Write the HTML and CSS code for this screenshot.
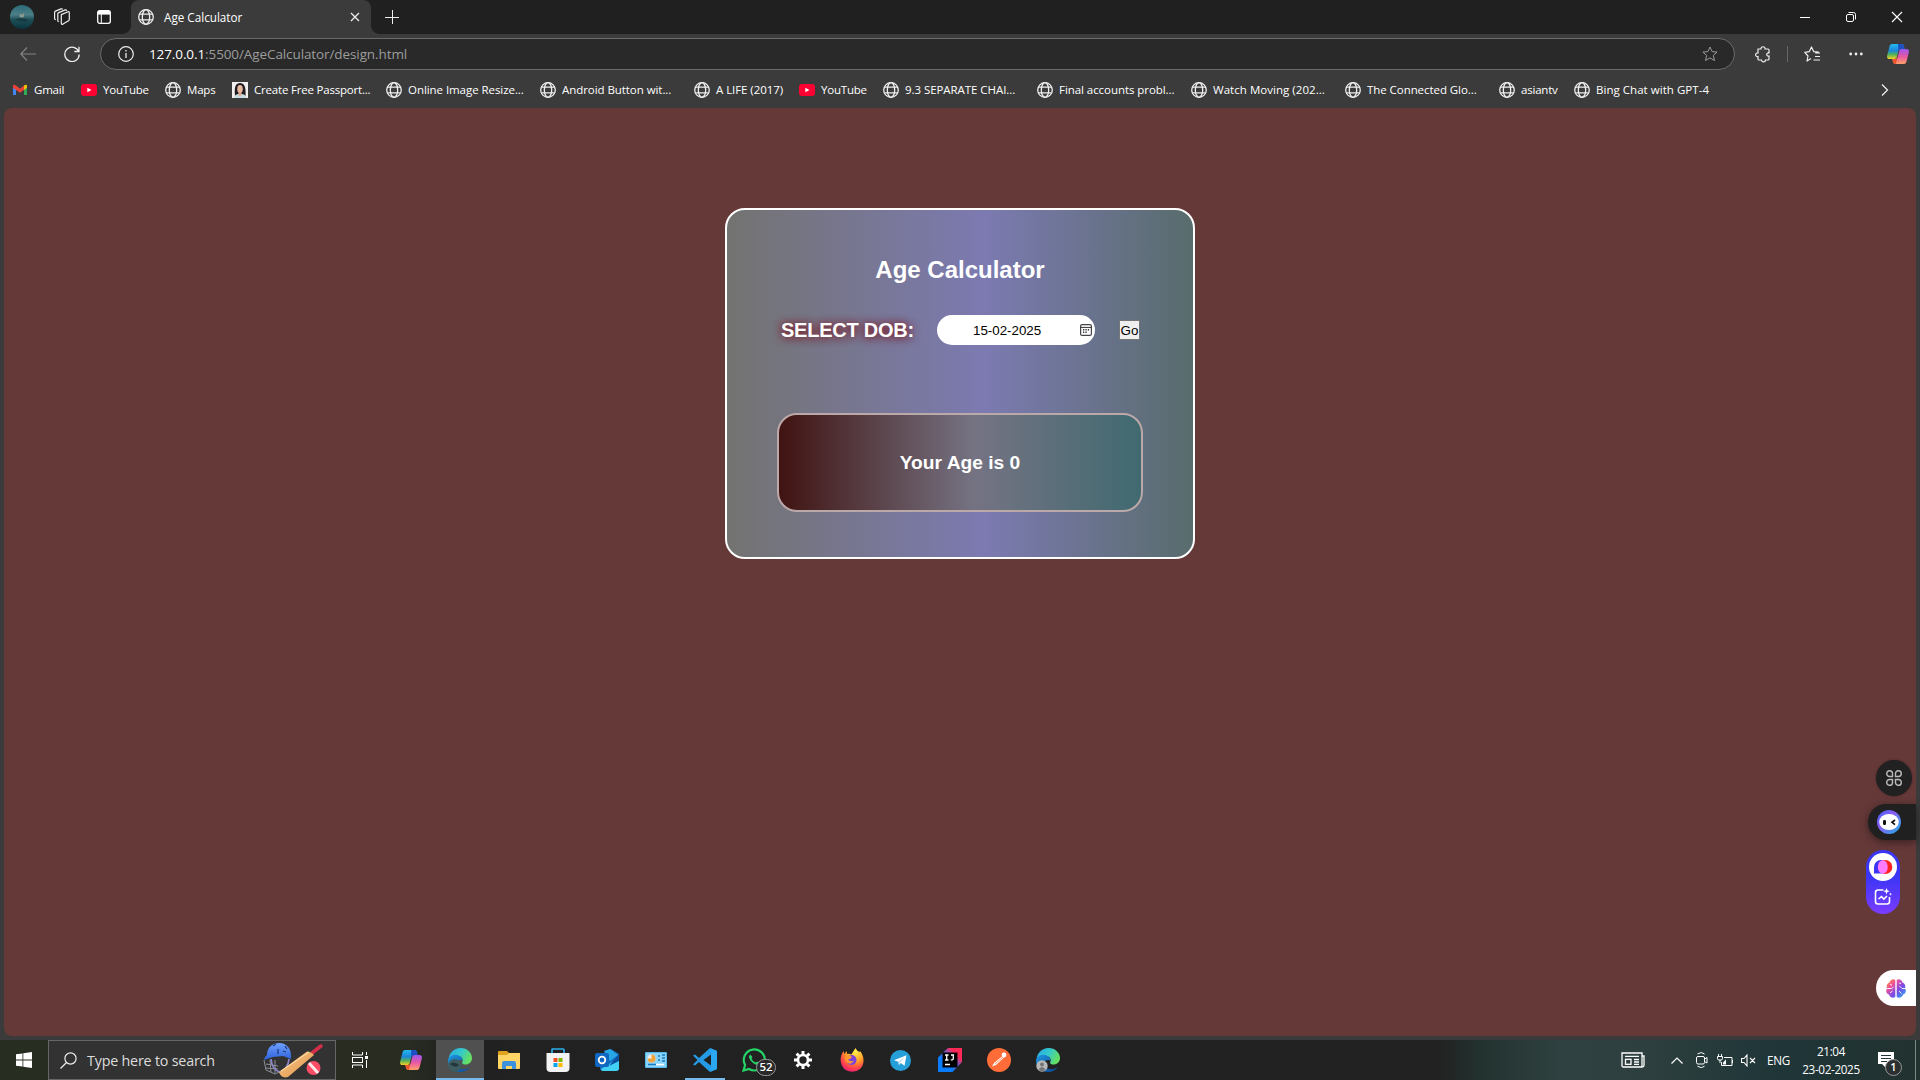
FILE: index.html
```html
<!DOCTYPE html>
<html lang="en">
<head>
<meta charset="utf-8">
<title>Age Calculator</title>
<link rel="stylesheet" href="styles.css">
</head>
<body>
<svg class="defs" width="0" height="0" aria-hidden="true">
  <defs>
    <linearGradient id="cpA" x1="0" y1="0" x2="0" y2="1"><stop offset="0" stop-color="#23b8f0"/><stop offset=".45" stop-color="#1c86d8"/><stop offset=".7" stop-color="#52b25c"/><stop offset="1" stop-color="#f6cf22"/></linearGradient>
    <linearGradient id="cpB" x1="0" y1="0" x2="0" y2="1"><stop offset="0" stop-color="#9a58ee"/><stop offset=".5" stop-color="#e857a6"/><stop offset="1" stop-color="#ffa067"/></linearGradient>
    <linearGradient id="edA" x1="0" y1="0" x2="1" y2=".4"><stop offset="0" stop-color="#2aa7e6"/><stop offset=".55" stop-color="#34c9cd"/><stop offset="1" stop-color="#63df63"/></linearGradient>
    <linearGradient id="edB" x1="0" y1="0" x2="1" y2="1"><stop offset="0" stop-color="#1e96e0"/><stop offset="1" stop-color="#0d4897"/></linearGradient>
    <radialGradient id="ffA" cx=".65" cy=".15" r=".95"><stop offset="0" stop-color="#fff14a"/><stop offset=".45" stop-color="#ff9a26"/><stop offset=".75" stop-color="#ff3f4e"/><stop offset="1" stop-color="#e31587"/></radialGradient>
    <linearGradient id="ij" x1="0" y1="1" x2="1" y2="0"><stop offset=".35" stop-color="#087cfa"/><stop offset=".6" stop-color="#8b55b8"/><stop offset=".75" stop-color="#fe2857"/></linearGradient>
    <linearGradient id="helm" x1="0" y1="0" x2="0" y2="1"><stop offset="0" stop-color="#6fa0ff"/><stop offset="1" stop-color="#2d60d8"/></linearGradient>
    <linearGradient id="bat" x1="0" y1="0" x2="1" y2="1"><stop offset="0" stop-color="#ffd08a"/><stop offset="1" stop-color="#d98c48"/></linearGradient>
    <linearGradient id="brain" x1="0" y1="0" x2="1" y2="1"><stop offset="0" stop-color="#ffa21e"/><stop offset=".3" stop-color="#f0509a"/><stop offset=".6" stop-color="#7a4be8"/><stop offset="1" stop-color="#1fb6f2"/></linearGradient>
    <linearGradient id="ring" x1="0" y1="0" x2="1" y2="1"><stop offset="0" stop-color="#3b62f5"/><stop offset=".4" stop-color="#8b5cf6"/><stop offset="1" stop-color="#1bb5ea"/></linearGradient>
    <linearGradient id="sea" x1="0" y1="0" x2="0" y2="1"><stop offset="0" stop-color="#2c6a78"/><stop offset=".4" stop-color="#4c7f87"/><stop offset=".6" stop-color="#1d5058"/><stop offset="1" stop-color="#0b333d"/></linearGradient>
  </defs>
  <symbol id="globe" viewBox="0 0 16 16"><g fill="none" stroke="#eee" stroke-width="1.3"><circle cx="8" cy="8" r="7.3"/><ellipse cx="8" cy="8" rx="3.7" ry="7.3"/><path d="M1.4 5.2h13.2M1.4 10.8h13.2"/></g></symbol>
  <symbol id="copilot" viewBox="0 0 22 20"><path d="M5 0h9c2 0 2.6 1 3 2.600L17.500 5H14c-1.500 0-2.300.8-2.700 2.300L9.800 13c-.5 1.600-1.300 2-3 2H2.500C.3 15-.3 13.500.2 11.400L2.500 2.500C2.900.9 3.500 0 5 0z" fill="url(#cpA)"/><path d="M11 0h3c2 0 2.600 1 3 2.600L17.500 5H14c-1.300 0-2.100.6-2.600 1.700z" fill="#1d4fc4"/><path d="M17 20H9c-2 0-2.700-1-3.100-2.600L5.300 15H8c1.500 0 2.300-.8 2.700-2.300L12.200 7c.5-1.600 1.300-2 3-2h4.300c2.200 0 2.800 1.500 2.300 3.600L19.500 17.500c-.4 1.600-1 2.500-2.500 2.500z" fill="url(#cpB)"/><path d="M5.300 15H8c1.200 0 2-.5 2.500-1.600L8.900 20C7.100 19.900 6.300 19 5.900 17.400z" fill="#f0562b"/></symbol>
  <symbol id="edge" viewBox="0 0 24 24"><path d="M1 15C-1 7 5 0 12.500 0 19.500 0 24 5 24 10c0 4-3 6.500-6.500 6.500-2.500 0-4-1-3.200-2.600.9-1.600.7-5.900-5.300-5.900C4 8 1.200 11.500 1 15z" fill="url(#edA)"/><path d="M.1 11.500C1.500 8 5.500 6.300 9 7c3.500.6 6 3.200 5.300 5.800-1.500-1.600-6.800-.8-5.800 4 .9 4.200 5.700 5.600 10.500 3.700l2.600-1.500c-2 3.300-5.500 5-9.600 5C5 24-.6 18.500.1 11.500z" fill="url(#edB)"/></symbol>
  <symbol id="youtube" viewBox="0 0 16 12"><rect width="16" height="12" rx="3" fill="#ff0033"/><path d="M6.300 3.700v4.600l4.200-2.300z" fill="#fff"/></symbol>
</svg>

<header class="titlebar">
  <div class="tb-left">
    <svg class="avatar" width="24" height="24" viewBox="0 0 24 24"><circle cx="12" cy="12" r="12" fill="url(#sea)"/><path d="M5 14.500q7-3 14 1-7 3-14-1z" fill="#173b42"/><path d="M9.500 12l.5-3 3 .5.500-1.500.8 1.500-.8 3z" fill="#8f9a90"/></svg>
    <svg class="workspaces" width="18" height="18" viewBox="0 0 18 18"><g fill="none" stroke="#eee" stroke-width="1.200" stroke-linejoin="round"><path d="M8.300 6.600L15 3.800q1.300-.4 1.300.9v6.800q0 .8-.8 1.300L10 16.100q-1.700.7-1.700-1z"/><path d="M5.800 13.600q-1 .1-1-1.100V5.800q0-.8.900-1.200l6.500-2.700q1.200-.3 1.600.9"/><path d="M2.800 11.700Q1.600 11.500 1.600 10.500V4.300q0-.8.900-1.200L8 .9q1.200-.4 1.700.5"/></g></svg>
    <svg class="tab-actions" width="14" height="14" viewBox="0 0 14 14"><rect x=".7" y=".7" width="12.600" height="12.600" rx="2" fill="none" stroke="#fff" stroke-width="1.300"/><path d="M1 1h12v3.600H1z" fill="#fff"/><path d="M4.300 4v9" stroke="#fff"/></svg>
  </div>
  <div class="tab">
    <svg width="16" height="16"><use href="#globe"/></svg>
    <span class="tab-title">Age Calculator</span>
    <svg class="tab-close" width="10" height="10" viewBox="0 0 10 10"><path d="M1 1l8 8M9 1L1 9" stroke="#eee" stroke-width="1.300"/></svg>
  </div>
  <svg class="new-tab" width="14" height="14" viewBox="0 0 14 14"><path d="M7.500 0v14M0 7.500h14" stroke="#eee"/></svg>
  <div class="window-buttons">
    <svg width="46" height="34" viewBox="0 0 46 34"><path d="M18 17.500h10" stroke="#fff"/></svg>
    <svg width="46" height="34" viewBox="0 0 46 34"><g fill="none" stroke="#fff"><rect x="18.500" y="14.500" width="7" height="7" rx="1.500"/><path d="M20.500 12.500h5q2 0 2 2v5"/></g></svg>
    <svg width="46" height="34" viewBox="0 0 46 34"><path d="M18 12l10 10M28 12L18 22" stroke="#fff" stroke-width="1.100"/></svg>
  </div>
</header>

<section class="toolbar">
  <svg class="back" width="16" height="14" viewBox="0 0 16 14"><path d="M7 .5L.8 7 7 13.500M1 7h15" fill="none" stroke="#858585" stroke-width="1.100"/></svg>
  <svg class="reload" width="16" height="16" viewBox="0 0 16 16"><path d="M14.800 6A7.200 7.200 0 1 0 15.200 8.500M15 .8V5.500H10.300" fill="none" stroke="#eee" stroke-width="1.300"/></svg>
  <div class="address">
    <svg width="16" height="16" viewBox="0 0 16 16"><circle cx="8" cy="8" r="7.300" fill="none" stroke="#eee" stroke-width="1.200"/><path d="M8 7v5M8 4v1.500" stroke="#ddd" stroke-width="1.400"/></svg>
    <span class="url"><b>127.0.0.1</b>:5500/AgeCalculator/design.html</span>
    <svg class="star" width="16" height="16" viewBox="0 0 16 16"><path d="M8 1l2.100 4.600 5 .5-3.800 3.300 1.200 5.100L8 11.900l-4.500 2.600 1.200-5.100L.9 6.100l5-.5z" fill="none" stroke="#999" stroke-linejoin="round"/></svg>
  </div>
  <div class="tools">
    <svg class="puzzle" width="16" height="18" viewBox="0 0 16 18"><path d="M3 4h3c-.7-3 4.700-3 4 0h3q1 0 1 1v3c-3-.7-3 3.700 0 3v3q0 1-1 1h-2.500c0 2.500-4 2.500-4 0H4q-1 0-1-1v-2.500c-3.200.5-3.200-4 0-3.500z" fill="none" stroke="#eee" stroke-width="1.200"/></svg>
    <span class="divider"></span>
    <svg class="favs" width="17" height="16" viewBox="0 0 17 16"><path d="M16 7H11.200M16 10.500h-5M16 14H9.500M7 12.500l-4 2.500 1-5L.8 6.300l4.400-.6L7.500 1l2.300 4.700 5 .4" fill="none" stroke="#eee" stroke-width="1.200" stroke-linejoin="round"/></svg>
    <svg class="more" width="14" height="4" viewBox="0 0 14 4"><g fill="#eee"><circle cx="1.700" cy="2" r="1.400"/><circle cx="7" cy="2" r="1.400"/><circle cx="12.300" cy="2" r="1.400"/></g></svg>
    <svg class="cp" width="22" height="20"><use href="#copilot"/></svg>
  </div>
</section>

<nav class="bookmarks">
  <a class="tight"><svg width="16" height="16" viewBox="0 0 16 16"><path d="M1 4v9h3V6z" fill="#4285f4"/><path d="M12 6v7h3V4z" fill="#34a853"/><path d="M12 3.500V8l3-2.300V4c0-1.500-1.500-1.700-3-.5z" fill="#fbbc04"/><path d="M1 4v1.700l7 5 4-2.800V3.500L8 6.700 4 3.500C2.500 2.300 1 2.500 1 4z" fill="#ea4335"/></svg><span>Gmail</span></a>
  <a class="tight"><svg width="16" height="12"><use href="#youtube"/></svg><span>YouTube</span></a>
  <a class="tight"><svg width="16" height="16"><use href="#globe"/></svg><span>Maps</span></a>
  <a class="tight"><svg width="16" height="16" viewBox="0 0 16 16"><path d="M0 0h16v16H0z" fill="#f4efef"/><path d="M3 14C2 4 4 1 8 1s6 3 5.500 13z" fill="#1d1a20"/><ellipse cx="8" cy="7" rx="2.800" ry="4" fill="#eab99d"/><path d="M2 16q1-4 4.500-4h3q4 0 5 4z" fill="#c9dbe2"/><path d="M6.500 10h3v3l-1.500 1.500L6.500 13z" fill="#e0a88d"/></svg><span>Create Free Passport...</span></a>
  <a><svg width="16" height="16"><use href="#globe"/></svg><span>Online Image Resize...</span></a>
  <a><svg width="16" height="16"><use href="#globe"/></svg><span>Android Button wit...</span></a>
  <a><svg width="16" height="16"><use href="#globe"/></svg><span>A LIFE (2017)</span></a>
  <a class="tight"><svg width="16" height="12"><use href="#youtube"/></svg><span>YouTube</span></a>
  <a><svg width="16" height="16"><use href="#globe"/></svg><span>9.3 SEPARATE CHAI...</span></a>
  <a><svg width="16" height="16"><use href="#globe"/></svg><span>Final accounts probl...</span></a>
  <a class="wide"><svg width="16" height="16"><use href="#globe"/></svg><span>Watch Moving (202...</span></a>
  <a><svg width="16" height="16"><use href="#globe"/></svg><span>The Connected Glo...</span></a>
  <a class="tight"><svg width="16" height="16"><use href="#globe"/></svg><span>asiantv</span></a>
  <a class="wide"><svg width="16" height="16"><use href="#globe"/></svg><span>Bing Chat with GPT-4</span></a>
  <svg class="overflow" width="8" height="12" viewBox="0 0 8 12"><path d="M1 .5L6.500 6 1 11.500" fill="none" stroke="#eee" stroke-width="1.300"/></svg>
</nav>

<main class="page">
  <section class="card">
    <h1>Age Calculator</h1>
    <div class="dob-row">
      <label>SELECT DOB:</label>
      <div class="date-input"><span>15-02-2025</span>
        <svg width="12" height="12" viewBox="0 0 12 12"><rect x=".6" y=".6" width="10.800" height="10.800" rx="1.500" fill="none" stroke="#444" stroke-width="1.200"/><path d="M.6 3.400h10.800" stroke="#333"/><path d="M3 5.800h1.300M5.400 5.800h1.300M7.800 5.800h1.300M3 8.300h1.300M5.400 8.300h1.300" stroke="#333" stroke-width="1.400"/></svg>
      </div>
      <button type="button">Go</button>
    </div>
    <div class="result">Your Age is 0</div>
  </section>

  <div class="float float-grid">
    <svg width="16" height="16" viewBox="0 0 16 16"><g fill="none" stroke="#bbb" stroke-width="1.400"><path d="M6.500 6.500H3.600A2.900 2.900 0 1 1 6.500 3.600zM9.500 6.500V3.600A2.900 2.900 0 1 1 12.400 6.500zM6.500 9.500v2.900A2.900 2.900 0 1 1 3.600 9.500zM9.500 9.500h2.900A2.900 2.900 0 1 1 9.500 12.400z"/></g></svg>
  </div>
  <div class="float float-bot">
    <svg width="24" height="24" viewBox="0 0 24 24"><circle cx="12" cy="12" r="12" fill="url(#ring)"/><ellipse cx="12" cy="12" rx="9.800" ry="8" fill="#fff"/><rect x="6" y="10" width="3" height="5" rx="1.200" fill="#111"/><path d="M18 10l-3 2.300 3 2.300" fill="none" stroke="#111" stroke-width="1.700"/></svg>
  </div>
  <div class="float float-pill">
    <svg width="28" height="28" viewBox="0 0 28 28"><circle cx="14" cy="14" r="14" fill="#fff"/><path d="M5 20.500V14a7 7 0 0 1 14 0 6.500 6.500 0 0 1-6.500 6.500z" fill="#3c35f5"/><circle cx="16.300" cy="14" r="7" fill="#ff2222"/><ellipse cx="13.800" cy="14" rx="5" ry="6.800" fill="#ff7bff"/></svg>
    <svg width="18" height="18" viewBox="0 0 18 18"><path d="M9.500 2H4Q1.500 2 1.500 4.500v9Q1.500 16 4 16h9q2.500 0 2.500-2.500V9M4.500 11l3-2.500L9.800 11 13 8" fill="none" stroke="#fff" stroke-width="1.600"/><path d="M12.500 0l.9 2.300 2.300.9-2.300.9-.9 2.300-.9-2.300-2.300-.9 2.300-.9zM16.500 4.500l.5 1.200 1 .4-1 .4-.5 1.200-.5-1.200-1-.4 1-.4z" fill="#fff"/></svg>
  </div>
  <div class="float float-brain">
    <svg width="20" height="19" viewBox="0 0 20 19"><path d="M9.300 1v17C7 19.500 3.500 18.500 3 15.500 0 14.500-.5 11.500 1 9.500 0 6.500 1.500 4 3.500 3.500 4.500.5 7.500-.5 9.300 1zM10.700 1v17c2.300 1.500 5.800.5 6.300-2.500 3-1 3.500-4 2-6 1-3-.5-5.500-2.500-6C15.500.5 12.500-.5 10.700 1z" fill="url(#brain)"/><path d="M1 9.500h4.500l2-1.500M4 5l2 1.500M4 14l2.500-2M19 9.500h-3l-2.500-2.500M13 12l2.500 2.500M13 4l2 .5" fill="none" stroke="#fff" stroke-width=".9"/></svg>
  </div>
</main>

<footer class="taskbar">
  <div class="start"><svg width="16" height="16" viewBox="0 0 16 16"><path d="M0 2.300l6.500-.9v6.200H0zM7.300 1.300L16 0v7.600H7.300zM0 8.400h6.500v6.200L0 13.700zM7.300 8.400H16V16l-8.700-1.300z" fill="#fff"/></svg></div>
  <div class="search">
    <svg width="17" height="17" viewBox="0 0 17 17"><circle cx="10.500" cy="6.500" r="5.600" fill="none" stroke="#eee" stroke-width="1.200"/><path d="M6.500 10.500L.5 16.500" stroke="#eee" stroke-width="1.200"/></svg>
    <span>Type here to search</span>
    <svg class="cricket" width="62" height="36" viewBox="0 0 62 36">
      <g fill="none" stroke="#8b8f95" stroke-width="1"><path d="M1 18l2 10 9 4 6-3M3 22l12 2M2 26l13 1M7 18l1 12M12 18v13"/></g>
      <path d="M8 17q1 11 9 13 8-3 9-13" fill="none" stroke="#8d88cc" stroke-width="1.700"/>
      <path d="M4 13C4 5 10 1 16 1c8 0 13 6 12 16l-8-3-10 1-9 3q0-3 3-5z" fill="url(#helm)"/>
      <path d="M10 4l3-2M15 7v5M22 4l2 3M20 9l3 1" stroke="#203b78" stroke-width="1.300"/>
      <path d="M49 11L58 4" stroke="#d42f48" stroke-width="3.500" stroke-linecap="round"/>
      <path d="M16 30L44 9.500q4 0 7 3.500L25 35q-7 2-9-5z" fill="url(#bat)"/><path d="M18 29l28-19" stroke="#ffe0ac"/>
      <circle cx="50.500" cy="26" r="7" fill="#fb4c65"/><path d="M46 21l9 10" stroke="#ffe6e9" stroke-width="3"/>
    </svg>
  </div>
  <div class="task view"><svg width="16" height="16" viewBox="0 0 16 16"><g fill="none" stroke="#fff"><path d="M.5 0v3h10V0M.5 16v-3h10v3"/><rect x=".5" y="5.500" width="10" height="5"/><path d="M14.500 0v3M14.500 8v8"/></g><path d="M13 4h3v3h-3z" fill="#fff"/></svg></div>
  <div class="task"><svg width="22" height="20"><use href="#copilot"/></svg></div>
  <div class="task active"><svg width="24" height="24" viewBox="0 0 24 24"><use href="#edge"/><circle cx="6.500" cy="17.500" r="6.500" fill="#3e5d60"/><path d="M2 16q4-3 9 1-3 4-9-1z" fill="#23363b"/></svg></div>
  <div class="task"><svg width="22" height="18" viewBox="0 0 22 18"><path d="M0 1q0-1 1-1h8l2 2h11v14H0z" fill="#e0a21d"/><path d="M0 4h9l2-2h11v15q0 1-1 1H1q-1 0-1-1z" fill="#ffd565"/><path d="M4 18v-6q0-2 2-2h10q2 0 2 2v6h-4v-3H8v3z" fill="#3e91dd"/></svg></div>
  <div class="task"><svg width="24" height="24" viewBox="0 0 24 24"><path d="M6 6V1.800q0-.8.800-.8h10.400q.8 0 .8.800V6" fill="none" stroke="#2cafe8" stroke-width="1.700"/><path d="M.5 5h23v15q0 4-4 4h-15q-4 0-4-4z" fill="#f3f3f3"/><path d="M7.500 10h4v4h-4z" fill="#f25022"/><path d="M12.500 10h4v4h-4z" fill="#7fba00"/><path d="M7.500 15h4v4h-4z" fill="#00a4ef"/><path d="M12.500 15h4v4h-4z" fill="#ffb900"/></svg></div>
  <div class="task"><svg width="24" height="22" viewBox="0 0 24 22"><path d="M5 6L16 0l8 5v14q0 3-3 3H9q-4 0-4-3z" fill="#1470c6"/><path d="M9 2l6-2 8 6-8 6z" fill="#27a6e5"/><path d="M24 9v10q0 3-3 3H9q-3 0-3-2z" fill="#42d1f5"/><path d="M24 5v7l-10 5z" fill="#0b4f9f"/><rect y="4" width="14" height="14" rx="2" fill="#0f67c1"/><circle cx="7" cy="11" r="3.300" fill="none" stroke="#fff" stroke-width="1.800"/></svg></div>
  <div class="task"><svg width="22" height="16" viewBox="0 0 22 16"><rect width="22" height="16" rx="1" fill="#54b8ed"/><rect x="1" y="1" width="20" height="14" fill="#8bd3f7"/><circle cx="6.500" cy="6.500" r="4" fill="#ececec"/><path d="M6.500 6.500v-4a4 4 0 1 1-4 4z" fill="#f1a33b"/><path d="M13 4h2M13 8h2M17 3h3M17 6h3M17 9h3M3 12.500h8" stroke="#147bc0" stroke-width="1.500"/><path d="M11 12.500h8" stroke="#fff" stroke-width="1.500"/></svg></div>
  <div class="task open"><svg width="24" height="24" viewBox="0 0 24 24"><path d="M17 0l7 3v18l-7 3L6 14l-4 3.500L0 16.500 4.500 12 0 7.500l2-1L6 10zM18 6.500L10.500 12 18 17.500z" fill="#269be5" fill-rule="evenodd"/><path d="M18 .5L24 3v18l-6 2.500z" fill="#2ba8f2"/></svg></div>
  <div class="task"><svg width="24" height="24" viewBox="0 0 24 24"><path d="M1.500 22.500L3.100 17A10.500 10.500 0 1 1 7 21z" fill="none" stroke="#25d366" stroke-width="2.200"/><path d="M8.500 6.500L7 8c-.8 3.500 5.500 9.500 9 9l1.500-1.500-2.500-2-1.500 1q-3-1.200-4-4l1-1.300z" fill="#25d366"/></svg><em class="count">52</em></div>
  <div class="task"><svg width="18" height="18" viewBox="0 0 18 18"><circle cx="9" cy="9" r="5" fill="none" stroke="#fff" stroke-width="2.600"/><g stroke="#fff" stroke-width="3"><path d="M9 0v3M9 15v3M0 9h3M15 9h3M2.600 2.600l2.200 2.200M13.200 13.200l2.200 2.200M15.400 2.600l-2.200 2.200M4.800 13.200l-2.200 2.200"/></g></svg></div>
  <div class="task"><svg width="24" height="24" viewBox="0 0 24 24"><path d="M15.500 0c1 2 2 3 4 4l.5-1q4 4.500 3.500 11-1 9-11.500 9.800Q1.500 23 .6 12.500.5 7 3.500 3l.8 3L6.500 3l.8 3q2-.5 4 .5z" fill="url(#ffA)"/><circle cx="11.500" cy="12" r="5" fill="#7a43dc"/><path d="M6 8q4-2 6 1-1 2-4 2.500 2 3 6 1-3 5-7 2-3-3-1-6.500z" fill="#ff9830"/></svg></div>
  <div class="task"><svg width="21" height="21" viewBox="0 0 21 21"><circle cx="10.500" cy="10.500" r="10.500" fill="#269fd8"/><path d="M4 10.300L16.500 5.300 14.500 15.700 10.800 13 9 15l-.7-3.300z" fill="#fff"/><path d="M8.300 11.700L14.500 7l-4.500 5.500L9 15z" fill="#b7dcf0"/></svg></div>
  <div class="task"><svg width="24" height="24" viewBox="0 0 24 24"><path d="M0 9.500L10 0h14v14L14.500 24H0z" fill="url(#ij)"/><path d="M4.500 4.500h15v15h-15z"/><path d="M7 7h3.500M8.700 7v5M7 12h3.500M13 7h3M15.300 7v3.500q0 1.500-2.500 1.300M7 16.500h5" fill="none" stroke="#fff" stroke-width="1.300"/></svg></div>
  <div class="task"><svg width="24" height="24" viewBox="0 0 24 24"><circle cx="12" cy="12" r="12" fill="#ff6c37"/><circle cx="17" cy="7" r="2.400" fill="#fff"/><path d="M15.500 8L7 15l-2 3.500L9 17l8-7.500z" fill="#fff"/><path d="M8 16l8-7" stroke="#ff6c37" stroke-width=".7"/></svg></div>
  <div class="task"><svg width="24" height="24" viewBox="0 0 24 24"><use href="#edge"/><circle cx="6" cy="18" r="5.700" fill="#b8b8b8"/><circle cx="6" cy="16.500" r="2" fill="#747474"/><path d="M2.500 21.500q3.500-5 7 0-3.500 3-7 0z" fill="#747474"/></svg></div>
  <div class="tray">
    <svg class="news" width="24" height="16" viewBox="0 0 24 16"><g fill="none" stroke="#fff" stroke-width="1.300"><path d="M1 1h20v14H2.500Q1 15 1 13.500zM21 4h2v9.500q0 1.500-2 1.500"/><path d="M4 4.300h14M13 7.500h5M13 10h5M13 12.300h5"/><rect x="4.500" y="7.300" width="5.500" height="5"/></g></svg>
    <svg class="chev" width="12" height="7" viewBox="0 0 12 7"><path d="M.5 6.500L6 1l5.500 5.500" fill="none" stroke="#fff" stroke-width="1.200"/></svg>
    <svg class="meet" width="12" height="16" viewBox="0 0 12 16"><g fill="none" stroke="#fff"><rect x=".5" y="4.500" width="8" height="7.500" rx="1.500"/><path d="M8.500 7l2.500-1.500V11L8.500 9.500M1.500 2q4-3 7 0M1.500 14.200q4 3 7 0"/></g></svg>
    <svg class="battery" width="17" height="13" viewBox="0 0 17 13"><g fill="none" stroke="#fff"><path d="M7 3.500h8v8H4.500V8M15.500 6v3"/><path d="M1.500 0v2M4.500 0v2M.5 2.500h5v2q0 1.500-1.500 1.500H2Q.5 6 .5 4.500zM3 6v3"/></g><path d="M6 10.500V8.500l3-3v5z" fill="#fff"/></svg>
    <svg class="speaker" width="15" height="13" viewBox="0 0 15 13"><path d="M.5 4.500H3L6 1v11L3 8.500H.5zM9 4l5 5M14 4L9 9" fill="none" stroke="#fff" stroke-width="1.100"/></svg>
    <span class="lang">ENG</span>
    <div class="clock"><span>21:04</span><span>23-02-2025</span></div>
    <div class="notify"><svg width="16" height="16" viewBox="0 0 16 16"><path d="M0 0h16v12H8v4l-4-4H0z" fill="#fff"/><path d="M3 3.500h10M3 6.500h10M3 9.500h6" stroke="#1f3538"/></svg><em>1</em></div>
    <span class="peek"></span>
  </div>
</footer>
</body>
</html>
```
FILE: styles.css
```css
* { box-sizing: border-box; }

body {
  margin: 0;
  width: 1920px;
  height: 1080px;
  overflow: hidden;
  display: flex;
  flex-direction: column;
  background: #3b3b3b;
  color: #fff;
  font: 12px "Open Sans", "Noto Sans", sans-serif;
}

svg { display: block; flex: none; }
em { font-style: normal; }
.defs { position: absolute; }

/* Title bar */
.titlebar { display: flex; align-items: center; height: 34px; flex: none; background: #202020; }
.tb-left { display: flex; align-items: center; width: 131px; padding-left: 10px; }
.workspaces { margin-left: 19px; }
.tab-actions { margin-left: 26px; }
.tab {
  position: relative;
  display: flex;
  align-items: center;
  align-self: stretch;
  width: 240px;
  padding: 0 11px 0 7px;
  background: #3b3b3b;
  border-radius: 8px 8px 0 0;
}
.tab::before, .tab::after {
  content: "";
  position: absolute;
  bottom: 0;
  width: 8px;
  height: 8px;
}
.tab::before { left: -8px; background: radial-gradient(circle at 0 0, transparent 7.500px, #3b3b3b 8px); }
.tab::after { right: -8px; background: radial-gradient(circle at 100% 0, transparent 7.500px, #3b3b3b 8px); }
.tab-title { margin-left: 10px; padding-bottom: 1px; font-size: 11.700px; }
.tab-close { margin-left: auto; }
.new-tab { margin-left: 14px; }
.window-buttons { display: flex; margin-left: auto; }

/* Toolbar */
.toolbar { display: flex; align-items: center; height: 40px; flex: none; padding-left: 20px; }
.reload { margin-left: 28px; }
.address {
  display: flex;
  align-items: center;
  width: 1635px;
  height: 32px;
  margin-left: 20px;
  padding: 0 16px 0 17px;
  background: #292929;
  border: 1px solid #6b6b6b;
  border-radius: 16px;
}
.url { margin-left: 15px; color: #9c9c9c; font-size: 13.500px; letter-spacing: -.1px; }
.url b { color: #fff; font-weight: 400; }
.star { margin-left: auto; }
.tools { display: flex; align-items: center; padding-left: 20px; }
.divider { width: 1px; height: 16px; margin-left: 16px; background: #666; }
.favs { margin-left: 16px; }
.more { margin-left: 28px; }
.cp { margin-left: 24px; }

/* Bookmarks */
.bookmarks {
  display: grid;
  grid-template-columns: 69px 84px 67px 154px 154px 154px 105px 84px 154px 154px 154px 154px 75px 307px 8px;
  align-items: center;
  height: 34px;
  flex: none;
  padding: 0 0 2px 12px;
}
.bookmarks a { display: flex; align-items: center; gap: 6px; white-space: nowrap; font-size: 11.500px; letter-spacing: -.06px; }
.bookmarks a.tight { letter-spacing: -.2px; }
.bookmarks a.wide { letter-spacing: .04px; }
.bookmarks span { padding-bottom: 1px; }

/* Page */
.page {
  position: relative;
  height: 928px;
  flex: none;
  margin: 0 4px 4px;
  padding-top: 100px;
  background: #663939;
  border-radius: 8px;
  font-family: "Liberation Sans", Arial, sans-serif;
}
.card {
  width: 470px;
  height: 351px;
  margin: 0 auto;
  padding: 46px 50px 0;
  border: 2px solid #fff;
  border-radius: 20px;
  background: linear-gradient(to right, #737371, #7c7ab1 55.500%, #586c6c);
}
.card h1 { margin: 0; font-size: 24px; line-height: 28px; text-align: center; }
.dob-row { display: flex; align-items: center; height: 30px; margin-top: 31px; padding-left: 4px; }
.dob-row label { width: 156px; font-size: 20px; font-weight: 700; letter-spacing: -.25px; text-shadow: 0 1px 8px #70202c, -1px 0 8px #8a2c3c; }
.date-input {
  display: flex;
  align-items: center;
  width: 158px;
  height: 30px;
  padding: 0 3px 0 36px;
  background: #fff;
  border-radius: 15px;
  color: #000;
  font-size: 13.330px;
}
.date-input svg { margin: 0 0 1px auto; }
.dob-row button {
  width: 21px;
  height: 20px;
  margin-left: 24px;
  padding: 0;
  border: 1px solid #767676;
  background: #efefef;
  color: #000;
  font: 13.330px "Liberation Sans", Arial, sans-serif;
}
.result {
  display: flex;
  align-items: center;
  justify-content: center;
  height: 99px;
  margin-top: 68px;
  border: 2px solid #bba8a8;
  border-radius: 20px;
  background: linear-gradient(to right, #401311, #757383 54%, #406a70);
  font-size: 19.200px;
  font-weight: 700;
}

/* Extension widgets floating over the page */
.float { position: absolute; display: flex; align-items: center; }
.float-grid { top: 652px; right: 4px; width: 36px; height: 36px; justify-content: center; background: #212121; border-radius: 50%; box-shadow: 0 0 3px #0005; }
.float-bot { top: 696px; right: 0; width: 48px; height: 36px; padding-left: 9px; background: #202020; border-radius: 18px 0 0 18px; box-shadow: 0 2px 10px #0007; }
.float-pill { top: 742px; right: 16px; width: 34px; height: 64px; padding-top: 3px; flex-direction: column; gap: 7px; background: linear-gradient(#3a35f5 40%, #7a3cff); border-radius: 17px; }
.float-brain { top: 862px; right: 0; width: 40px; height: 36px; padding-left: 10px; background: #fff; border-radius: 18px 0 0 18px; }

/* Taskbar */
.taskbar {
  display: flex;
  height: 40px;
  flex: none;
  background: linear-gradient(to right, #272d20 0, #282c21 410px, #212121 450px, #222 1440px, #22322f 1480px, #2f4140 1560px, #2d3f3e 1650px, #1f3538 1780px, #22322f 1920px);
}
.start { display: flex; align-items: center; justify-content: center; width: 48px; }
.search {
  display: flex;
  align-items: center;
  width: 288px;
  padding: 0 10px 0 11px;
  background: #323232;
  border: 1px solid #666;
  color: #ddd;
  font-size: 14.300px;
}
.search span { margin-left: 10px; letter-spacing: -.2px; }
.cricket { margin-left: auto; }
.task { position: relative; display: flex; align-items: center; justify-content: center; width: 49px; }
.task.view { width: 50px; padding-right: 2px; }
.task.active { background: #505050; border-bottom: 2px solid #76b9ed; padding-top: 2px; width: 48px; margin-left: 1px; }
.task.open::after { content: ""; position: absolute; left: 5px; right: 4px; bottom: 0; height: 2px; background: #76b9ed; }
.count {
  position: absolute;
  left: 27px;
  top: 19px;
  width: 20px;
  height: 17px;
  border: 1px solid #999;
  border-radius: 9px;
  background: #292929;
  font-size: 11.500px;
  font-weight: 600;
  line-height: 14px;
  text-align: center;
}
.tray { display: flex; align-items: center; margin-left: auto; width: 299px; }
.chev { margin-left: 26px; }
.meet { margin-left: 13px; }
.battery { margin-left: 9px; }
.speaker { margin-left: 7px; }
.lang { width: 36px; margin-left: 11px; padding-bottom: 1px; font-size: 11.700px; letter-spacing: -.3px; }
.clock { display: flex; flex-direction: column; width: 58px; margin-left: -1px; padding-bottom: 1px; text-align: center; line-height: 18px; font-size: 11.700px; letter-spacing: -.35px; white-space: nowrap; }
.notify { position: relative; margin-left: 18px; }
.notify em {
  position: absolute;
  left: 7px;
  top: 7px;
  width: 17px;
  height: 17px;
  border: 1px solid #999;
  border-radius: 50%;
  background: #2b2f30;
  font-size: 11px;
  font-weight: 600;
  line-height: 14px;
  text-align: center;
}
.peek { width: 1px; height: 40px; margin: 0 4px 0 auto; background: #7c8787; }
```
